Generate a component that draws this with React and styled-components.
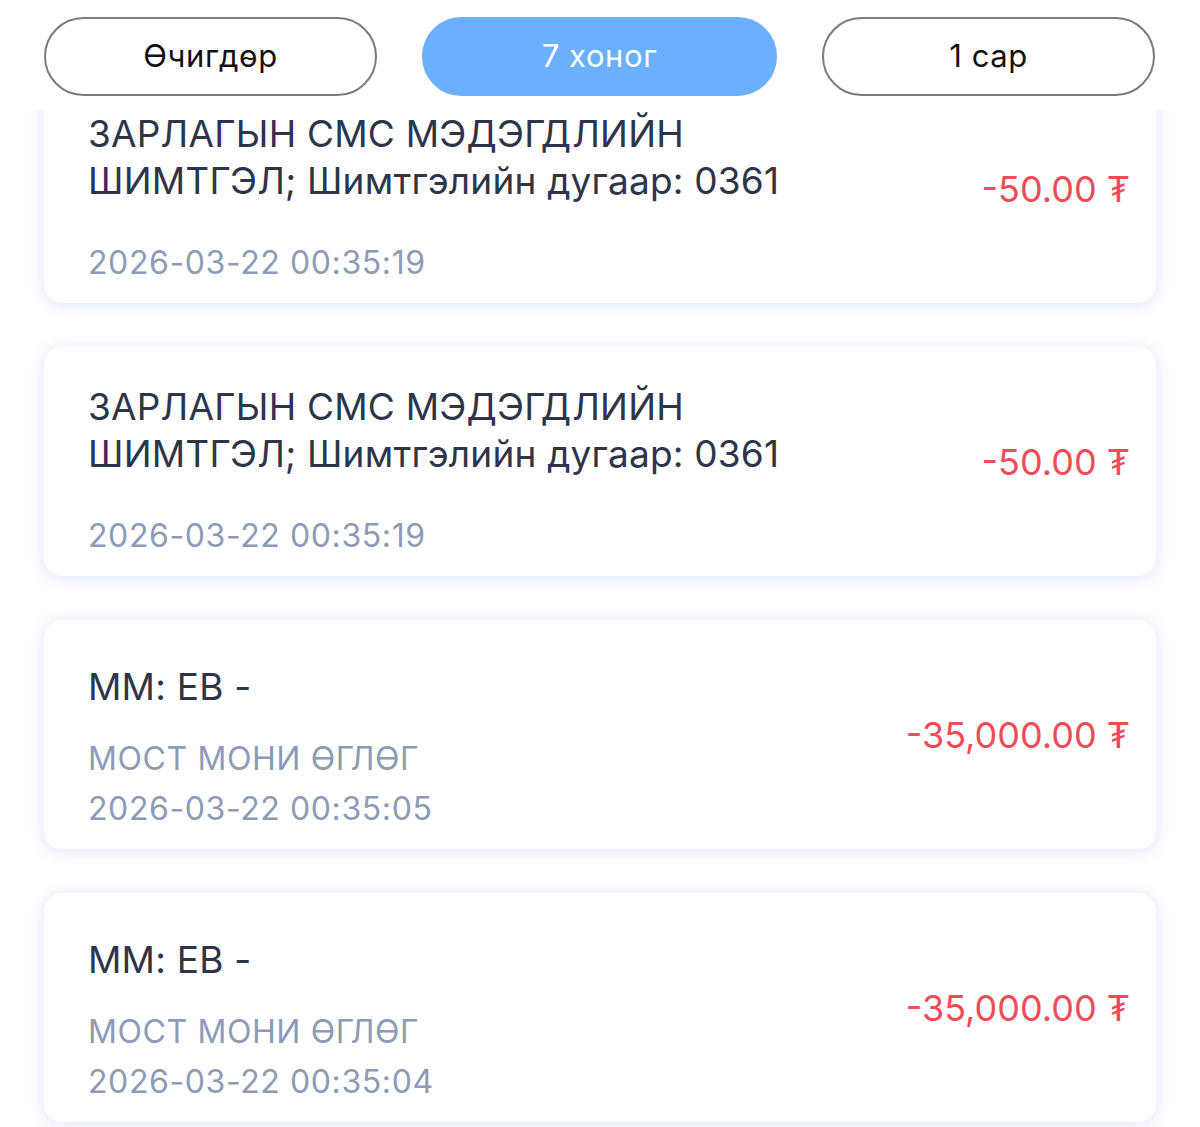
import styled, { createGlobalStyle } from "styled-components";

const GlobalStyle = createGlobalStyle`
  html, body {
    margin: 0;
    padding: 0;
    background: #ffffff;
    font-family: Inter, "Noto Sans", "Liberation Sans", sans-serif;
  }
`;

const tabs = [
  { id: "yesterday", label: "Өчигдөр" },
  { id: "week", label: "7 хоног" },
  { id: "month", label: "1 сар" },
];

const records = [
  {
    id: 1,
    title: "ЗАРЛАГЫН СМС МЭДЭГДЛИЙН ШИМТГЭЛ; Шимтгэлийн дугаар: 0361",
    date: "2026-03-22 00:35:19",
    amount: "-50.00 ₮",
  },
  {
    id: 2,
    title: "ЗАРЛАГЫН СМС МЭДЭГДЛИЙН ШИМТГЭЛ; Шимтгэлийн дугаар: 0361",
    date: "2026-03-22 00:35:19",
    amount: "-50.00 ₮",
  },
  {
    id: 3,
    title: "ММ: ЕВ -",
    note: "МОСТ МОНИ ӨГЛӨГ",
    date: "2026-03-22 00:35:05",
    amount: "-35,000.00 ₮",
  },
  {
    id: 4,
    title: "ММ: ЕВ -",
    note: "МОСТ МОНИ ӨГЛӨГ",
    date: "2026-03-22 00:35:04",
    amount: "-35,000.00 ₮",
  },
];

const App = () => {
  return (
    <Page>
      <GlobalStyle />
      <TabBar>
        {tabs.map((tab) => (
          <Tab key={tab.id} $active={tab.id === "week"}>
            {tab.label}
          </Tab>
        ))}
      </TabBar>
      <List>
        <Scroll>
          {records.map((record) => (
            <Card key={record.id}>
              <Info $spaced={!record.note}>
                <Title $spaced={!record.note}>{record.title}</Title>
                {record.note && <Meta>{record.note}</Meta>}
                <Meta>{record.date}</Meta>
              </Info>
              <Amount>{record.amount}</Amount>
            </Card>
          ))}
        </Scroll>
      </List>
    </Page>
  );
};

export default App;

// styled Components
const Page = styled.div`
  height: 1127px;
  display: flex;
  flex-direction: column;
  overflow: hidden;
  background: #ffffff;
`;

const TabBar = styled.div`
  position: relative;
  z-index: 2;
  height: 110px;
  box-sizing: border-box;
  padding: 17px 44px 0;
  display: grid;
  grid-template-columns: 333px 355px 333px;
  grid-template-rows: 79px;
  column-gap: 45px;
  background: #ffffff;
`;

const Tab = styled.button`
  box-sizing: border-box;
  border-radius: 40px;
  border: 2px solid ${({ $active }) => ($active ? "#6ab0fd" : "#7b7b7b")};
  background: ${({ $active }) => ($active ? "#6ab0fd" : "#ffffff")};
  color: ${({ $active }) => ($active ? "#ffffff" : "#111111")};
  font-family: Inter, "Noto Sans", "Liberation Sans", sans-serif;
  font-size: 31px;
  letter-spacing: 0.6px;
  padding: 0 0 2px;
`;

const List = styled.div`
  flex: 1;
  overflow: hidden;
`;

const Scroll = styled.div`
  margin-top: -36px;
  padding: 0 44px;
  display: flex;
  flex-direction: column;
  gap: 44px;
`;

const Card = styled.div`
  height: 229px;
  box-sizing: border-box;
  padding: 27px 26px 0 44px;
  border-radius: 18px;
  background: #ffffff;
  box-shadow: 0 2px 16px rgba(90, 120, 240, 0.2);
  display: flex;
  align-items: center;
  justify-content: space-between;
`;

const Info = styled.div`
  display: flex;
  flex-direction: column;
  max-width: 740px;
  padding-bottom: ${({ $spaced }) => ($spaced ? "7px" : "0")};
`;

const Title = styled.div`
  font-size: 37px;
  line-height: 47px;
  color: #2e3449;
  letter-spacing: 0.2px;
  margin-bottom: ${({ $spaced }) => ($spaced ? "34px" : "24px")};
`;

const Meta = styled.div`
  font-size: 32px;
  line-height: 50px;
  color: #8d9bb7;
  letter-spacing: 0.6px;
`;

const Amount = styled.div`
  font-size: 36px;
  color: #f04b57;
  white-space: nowrap;
  margin-top: -27px;
`;
